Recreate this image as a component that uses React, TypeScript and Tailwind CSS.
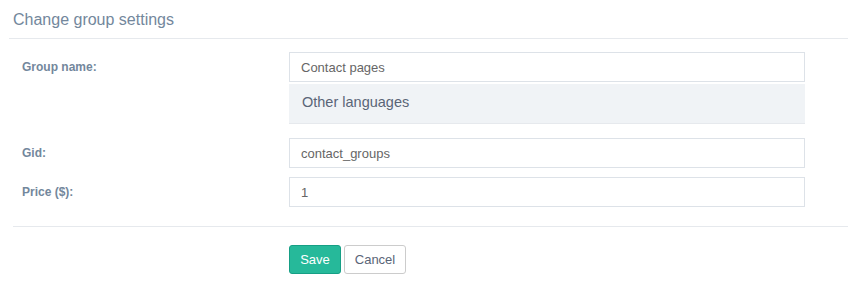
import React from 'react';

const Field: React.FC<{ label: string; value: string; className?: string }> = ({ label, value, className }) => (
  <div className={`flex items-center ${className ?? ''}`}>
    <label className="w-[276px] pl-[9px] text-[12px] font-bold text-[#73879C]">{label}</label>
    <input
      readOnly
      value={value}
      className="w-[516px] h-[30px] border border-[#DDE2E8] px-[11px] text-[13px] text-[#666] outline-none"
    />
  </div>
);

const App: React.FC = () => {
  return (
    <div className="w-[848px] h-[286px] bg-white text-[#73879C] font-['Liberation_Sans',Arial,sans-serif]">
      {/* Title */}
      <div className="ml-[9px] h-[39px] border-b border-[#E6E9ED] pl-[4px] pt-[1px] flex items-center">
        <h2 className="text-[16px] text-[#73879C]">Change group settings</h2>
      </div>

      <div className="ml-[13px]">
        {/* Group name */}
        <div className="flex pt-[13px]">
          <label className="w-[276px] pl-[9px] h-[30px] flex items-center text-[12px] font-bold text-[#73879C]">
            Group name:
          </label>
          <div className="w-[516px]">
            <input
              readOnly
              value="Contact pages"
              className="w-full h-[30px] border border-[#DDE2E8] px-[11px] text-[13px] text-[#666] outline-none"
            />
            <div className="mt-[2px] h-[40px] bg-[#F0F3F6] border-b border-[#E6E9ED] flex items-center pl-[13px] pb-[2px] text-[14.5px] text-[#5A6577]">
              Other languages
            </div>
          </div>
        </div>

        <Field label="Gid:" value="contact_groups" className="mt-[14px]" />
        <Field label="Price ($):" value="1" className="mt-[9px]" />

        <div className="mt-[19px] border-t border-[#E6E9ED]" />

        {/* Buttons */}
        <div className="pl-[276px] pt-[18px] flex gap-[3px]">
          <button className="w-[52px] h-[29px] rounded-[3px] bg-[#26B99A] border border-[#169F85] text-white text-[13px]">
            Save
          </button>
          <button className="w-[62px] h-[29px] rounded-[3px] bg-white border border-[#CCCCCC] text-[#5A6577] text-[13px]">
            Cancel
          </button>
        </div>
      </div>
    </div>
  );
};

export default App;
